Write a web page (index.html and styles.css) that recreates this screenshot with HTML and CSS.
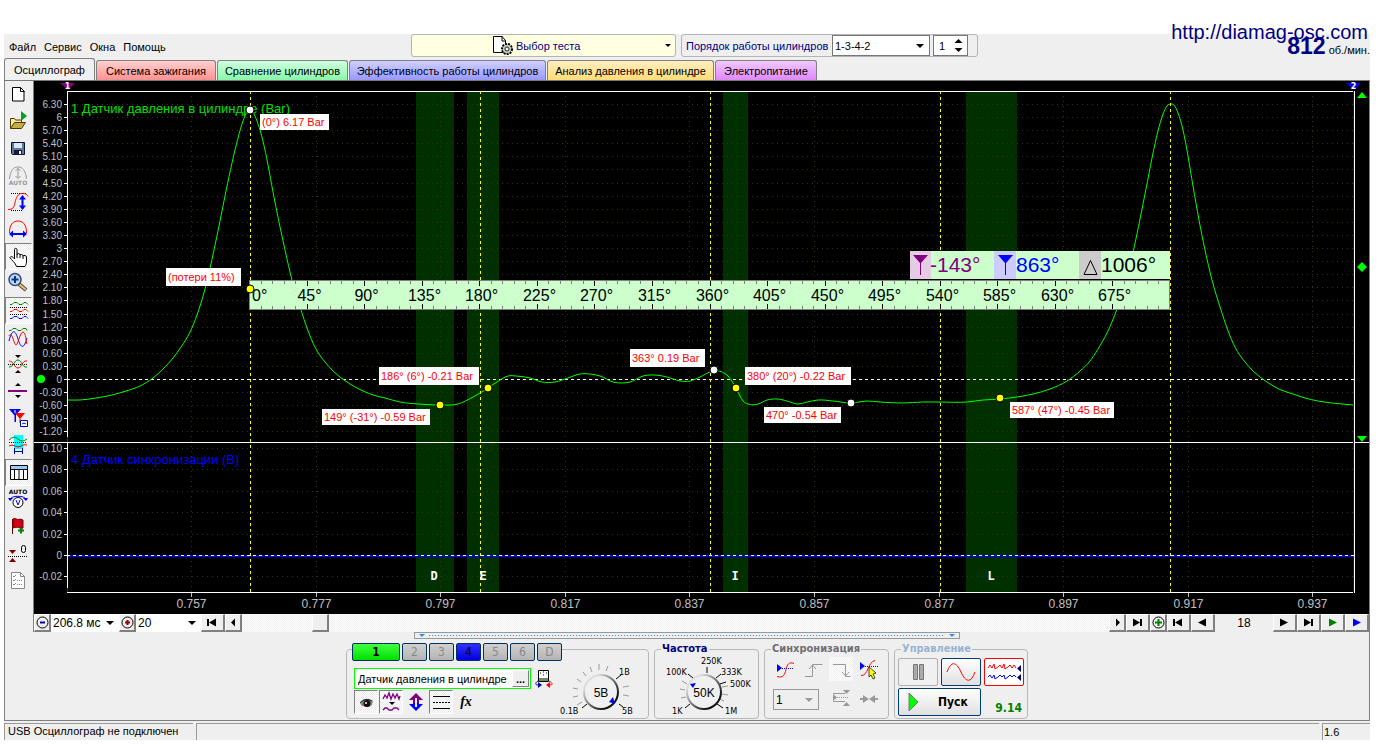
FILE: index.html
```html
<!DOCTYPE html>
<html lang="ru">
<head>
<meta charset="utf-8">
<title>Осциллограф</title>
<link rel="stylesheet" href="styles.css">
</head>
<body>
<div class="app">
  <a class="site-link" href="#">http://diamag-osc.com</a>

  <header class="topbar">
    <nav class="menu">
      <button type="button">Файл</button>
      <button type="button">Сервис</button>
      <button type="button">Окна</button>
      <button type="button">Помощь</button>
    </nav>
    <button type="button" class="test-button">
      <svg class="test-icon" width="22" height="22" viewBox="0 0 22 22">
        <path d="M1.5 1.5h8.500l3.500 4v12h-12z" fill="#fff" stroke="#000"/>
        <path d="M10 1v5h4" fill="none" stroke="#000"/>
        <circle cx="15" cy="14" r="5" fill="#bcd0bc" stroke="#000" stroke-width="2" stroke-dasharray="2 1"/>
        <circle cx="15" cy="14" r="4" fill="#bcd0bc"/>
        <circle cx="15" cy="14" r="2" fill="#fff" stroke="#222"/>
      </svg>
      <span>Выбор теста</span>
      <span class="caret"></span>
    </button>
    <div class="order-box">
      <label for="order">Порядок работы цилиндров</label>
      <span class="select-wrap order-select"><select id="order"><option>1-3-4-2</option></select></span>
      <span class="spin">
        <input type="text" value="1" aria-label="Номер цилиндра">
        <svg width="9" height="16" viewBox="0 0 9 16"><path d="M0.500 5h8L4.500 1zM0.500 10h8L4.500 14z"/></svg>
      </span>
    </div>
    <div class="rpm"><b>812</b><span>об./мин.</span></div>
  </header>

  <nav class="tabs">
    <button type="button" class="tab tab-active">Осциллограф</button>
    <button type="button" class="tab tab-red">Система зажигания</button>
    <button type="button" class="tab tab-green">Сравнение цилиндров</button>
    <button type="button" class="tab tab-blue">Эффективность работы цилиндров</button>
    <button type="button" class="tab tab-yellow">Анализ давления в цилиндре</button>
    <button type="button" class="tab tab-pink">Электропитание</button>
  </nav>

  <main class="main">
    <div class="workspace">
      <div class="toolbar">
        <button type="button" aria-label="Новый"><svg viewBox="0 0 27 27"><path d="M7.500 6.500h8l3.500 3.500v10h-11.500z" fill="#fff" stroke="#000"/><path d="M15.500 6.500v4h4" fill="none" stroke="#000"/></svg></button>
        <button type="button" aria-label="Открыть"><svg viewBox="0 0 27 27"><path d="M5.500 20.500v-10h4l1 1.500h6v3" fill="#ffe896" stroke="#4a3c00"/><path d="M5.500 20.500l4-6h11l-4 6z" fill="#c8ac48" stroke="#4a3c00"/><path d="M16 3l6 5-6 5z" fill="#00a020"/></svg></button>
        <button type="button" aria-label="Сохранить"><svg viewBox="0 0 27 27"><path d="M6.500 7.500h13v12h-12l-1-1z" fill="#607890" stroke="#101030"/><path d="M9 8h8v5H9z" fill="#d8ecff"/><path d="M9 15h8v5H9z" fill="#181840"/><path d="M14 16h2v3h-2z" fill="#fff"/></svg></button>
        <button type="button" aria-label="Авто амплитуда"><svg viewBox="0 0 27 27"><path d="M4.500 17c1-9 4-12 8.500-12s7.500 3 8.500 12M13 6v10M10.500 9L13 6.500 15.500 9M10.500 14l2.500 2.500 2.500-2.500" fill="none" stroke="#999"/><text x="13" y="23" text-anchor="middle" class="icon-text grey">AUTO</text></svg></button>
        <button type="button" aria-label="Высота"><svg viewBox="0 0 27 27"><path d="M6 4.500h16M6 21.500h12" stroke="#000" stroke-dasharray="1 1"/><path d="M3 20.500c5 0 6-2 7-7s3-9 7-9 5 1 6 3" fill="none" stroke="red"/><path d="M17.500 8v10" stroke="#00f" stroke-width="2"/><path d="M14 10.500l3.500-4.500 3.500 4.500zM14 16.500l3.500 4.500 3.500-4.500z" fill="#00f"/></svg></button>
        <button type="button" aria-label="Ширина"><svg viewBox="0 0 27 27"><path d="M4.500 17c0-8 3-12 8.500-12s8.500 4 8.500 12" fill="none" stroke="red"/><path d="M6 18h15" stroke="#00f" stroke-width="2"/><path d="M8 14.500L4 18l4 3.500zM18 14.500l4 3.500-4 3.500z" fill="#00f"/></svg></button>
        <button type="button" class="pressed" aria-label="Рука"><svg viewBox="0 0 27 27"><path d="M11.500 23.500c-1-4-5-6-6.500-9 1-1.500 3-1 4.500 1.500V6.500c0-1.500 2.500-1.500 2.500 0v5c1-1.500 3-1 3 .500 1-1 3-.5 3 1 1-1 3.500-.5 3.500 1v5c0 2-1 3-1.500 4.500z" fill="#fff" stroke="#000"/><path d="M12 11v4M15 12v3M18 13v3" stroke="#000"/></svg></button>
        <button type="button" aria-label="Масштаб"><svg viewBox="0 0 27 27"><path d="M14 14l7 6" stroke="#4a4a50" stroke-width="4"/><path d="M14.500 14.500l6 5" stroke="#f0c870" stroke-width="2"/><circle cx="10" cy="9.500" r="6" fill="#b8d8f8" stroke="#384878" stroke-width="1.500"/><path d="M10 6v7M6.500 9.500h7" stroke="#103080" stroke-width="2"/></svg></button>
        <button type="button" class="pressed" aria-label="Раздельные графики"><svg viewBox="0 0 27 27"><g fill="none"><path d="M5 7.500h2l2-2h3l2 2h3l2-2h2l2 2" stroke="#008000"/><path d="M5 10.500h18M5 17.500h18" stroke="#000" stroke-dasharray="1 1"/><path d="M5 14.500h2l2-2h3l2 2h3l2-2h2l2 2" stroke="red"/><path d="M5 21.500h2l2-2h3l2 2h3l2-2h2l2 2" stroke="#00f"/></g></svg></button>
        <button type="button" aria-label="Наложение"><svg viewBox="0 0 27 27"><g fill="none"><path d="M4 6.500h2l2-2h3l2 2h3l2-2h3l1 2" stroke="#008000"/><path d="M4 17c3-12 6-12 9-2s6 10 9-1" stroke="#00f"/><path d="M4 12c3-6 5 9 7 9s4-13 7-13 3 11 4 12" stroke="red"/></g></svg></button>
        <button type="button" aria-label="Центр"><svg viewBox="0 0 27 27"><path d="M10 4h6l-3 3zM10 22h6l-3-3z"/><path d="M3 13.500h20" stroke="#000" stroke-dasharray="1 1"/><g fill="none"><path d="M4 10c5 0 5 7 9 7s4-8 9-7" stroke="red"/><path d="M4 16c5 0 5-7 9-7s4 8 9 7" stroke="#008000"/></g></svg></button>
        <button type="button" aria-label="Разделитель"><svg viewBox="0 0 27 27"><path d="M10 8h6l-3-3zM10 17h6l-3 3z"/><path d="M3 13h19" stroke="#800080" stroke-width="2"/></svg></button>
        <button type="button" aria-label="Маркеры"><svg viewBox="0 0 27 27"><path d="M4 4h12l-6 7zM9.500 9h1.500v8H9.500z" fill="#00f"/><path d="M10 8h10l-5 6zM14.500 13h1v5h-1z" fill="red"/><path d="M10 5v3" stroke="#fff"/><path d="M15.500 15.500h7v6h-7z" fill="#fff" stroke="#008"/><path d="M17 19l2-1 2 1" fill="none" stroke="#00f"/></svg></button>
        <button type="button" aria-label="Диапазон"><svg viewBox="0 0 27 27"><path d="M9 3h9v14H9z" fill="#0ff"/><path d="M4 8q5-5 9-1t9 0" fill="none" stroke="#008000"/><path d="M4 10.500h18" stroke="#000" stroke-dasharray="1 1"/><path d="M4 14q3-2 6 0t6 0 6-1" fill="none" stroke="red"/><path d="M9.500 16v6M17.500 16v6M10 19.500h7" stroke="#00a"/></svg></button>
        <button type="button" class="pressed" aria-label="Таблица"><svg viewBox="0 0 27 27"><path d="M5.500 6.500h17v14h-17z" fill="#fff" stroke="#000"/><path d="M6 7h16v3H6z" fill="#98c8f8"/><path d="M6 10.500h16M9.500 11v9M14 11v9M18.500 11v9" stroke="#000"/></svg></button>
        <button type="button" aria-label="Авто вольтметр"><svg viewBox="0 0 27 27"><text x="13" y="8" text-anchor="middle" class="icon-text">AUTO</text><path d="M5 14c0-5 16-5 16 0" fill="none" stroke="#00f"/><path d="M3 12l2 3 3-3zM18 12l3 3 2-3z" fill="#00f"/><circle cx="13" cy="16.500" r="5" fill="#fff" stroke="#000"/><path d="M11 14l2 5 2-5" fill="none" stroke="#00f"/></svg></button>
        <button type="button" aria-label="Флаг"><svg viewBox="0 0 27 27"><path d="M7.500 6v15" stroke="#600"/><path d="M8 6c3-2 4 2 7 0l3 1v8c-3 1-5-2-10 0z" fill="#d00010" stroke="#700"/><path d="M16 14.500v6M13 17.500h6" stroke="#008000" stroke-width="2"/></svg></button>
        <button type="button" aria-label="Обнуление"><svg viewBox="0 0 27 27"><path d="M4 10h7l-3.500 4zM4 22h7l-3.500-4z" fill="#800000"/><path d="M3 16.500h20" stroke="#000" stroke-dasharray="1 1"/><rect x="16.500" y="5.500" width="4" height="7" rx="2" fill="none" stroke="#000"/></svg></button>
        <button type="button" aria-label="Отчёт"><svg viewBox="0 0 27 27"><path d="M6.500 5.500h9l4 4v12h-13z" fill="#fff" stroke="#888"/><path d="M15.500 5.500v4h4M8 9l1 1 2-2M8 13l1 1 2-2M8 17l1 1 2-2" fill="none" stroke="#888"/><path d="M12 13.500h5M12 17.500h5" stroke="#888" stroke-dasharray="1 1"/></svg></button>
      </div>

      <div class="scope">
        <svg id="chart" class="chart" role="img" aria-label="График давления в цилиндре"></svg>
        <div class="timebar">
          <button type="button" aria-label="Уменьшить" class="key key-s"><svg viewBox="0 0 15 15"><circle cx="7.500" cy="7.500" r="5.500" fill="none" stroke="#000"/><path d="M5 7.500h5" stroke="#00a" stroke-width="2"/></svg></button>
          <span class="select-wrap flat w68"><select aria-label="Время"><option>206.8 мс</option></select></span>
          <button type="button" aria-label="Увеличить" class="key key-s"><svg viewBox="0 0 15 15"><circle cx="7.500" cy="7.500" r="5.500" fill="none" stroke="#000"/><path d="M5 7.500h5M7.500 5v5" stroke="#900" stroke-width="2"/></svg></button>
          <span class="select-wrap flat w64"><select aria-label="Делений"><option>20</option></select></span>
          <button type="button" aria-label="В начало" class="key"><svg viewBox="0 0 15 15"><path d="M4 7.500l7-4v8zM2 4h2v7H2z"/></svg></button>
          <button type="button" aria-label="Назад" class="key key-s"><svg viewBox="0 0 15 15"><path d="M5 7.500l4-4v8z"/></svg></button>
          <div class="track"><button type="button" aria-label="Позиция" class="key key-s"></button></div>
          <button type="button" aria-label="Вперёд" class="key key-s"><svg viewBox="0 0 15 15"><path d="M10 7.500l-4-4v8z"/></svg></button>
          <button type="button" aria-label="В конец" class="key"><svg viewBox="0 0 15 15"><path d="M10 7.500l-7-4v8zM10 4h2v7h-2z"/></svg></button>
          <button type="button" aria-label="Добавить" class="key key-s"><svg viewBox="0 0 15 15"><circle cx="7.500" cy="7.500" r="5.500" fill="none" stroke="#000"/><path d="M4 7.500h7M7.500 4v7" stroke="#008000" stroke-width="2"/></svg></button>
          <button type="button" aria-label="Первая запись" class="key"><svg viewBox="0 0 15 15"><path d="M4 7.500l7-4v8zM2 4h2v7H2z"/></svg></button>
          <button type="button" aria-label="Предыдущая запись" class="key"><svg viewBox="0 0 15 15"><path d="M3 7.500l8-4v8z"/></svg></button>
          <output class="count">18</output>
          <button type="button" aria-label="Следующая запись" class="key"><svg viewBox="0 0 15 15"><path d="M11 7.500l-8-4v8z"/></svg></button>
          <button type="button" aria-label="Последняя запись" class="key"><svg viewBox="0 0 15 15"><path d="M10 7.500l-7-4v8zM10 4h2v7h-2z"/></svg></button>
          <button type="button" aria-label="Воспроизвести" class="key"><svg viewBox="0 0 15 15"><path d="M12 7.500l-8-4v8z" fill="#008000"/></svg></button>
          <button type="button" aria-label="Воспроизвести всё" class="key"><svg viewBox="0 0 15 15"><path d="M12 7.500l-8-4v8z" fill="#00f"/></svg></button>
        </div>
      </div>
    </div>

    <div class="splitter"><i></i><span></span><i></i></div>

    <div class="panels">
      <fieldset class="group g-channel">
        <legend aria-label="Каналы">
          <span class="channels">
            <button type="button" class="ch ch-1">1</button><button type="button" class="ch">2</button><button type="button" class="ch">3</button><button type="button" class="ch ch-4">4</button><button type="button" class="ch">5</button><button type="button" class="ch">6</button><button type="button" class="ch">D</button>
          </span>
        </legend>
        <div class="channel-body">
          <div class="channel-left">
            <div class="sensor-row">
              <span class="sensor"><input type="text" value="Датчик давления в цилиндре" aria-label="Датчик"><button type="button">...</button></span>
              <svg width="18" height="20" viewBox="0 0 18 20"><path d="M3.500 1.500h10v11h-10z" fill="#fff" stroke="#000"/><path d="M5 4h1M8 3h1M11 4h1M8 6h1" stroke="#000"/><path d="M4 9h9v3H4z" fill="#6a8a6a"/><path d="M3 12c-3 2-3 4 0 4" fill="none" stroke="#00a"/><path d="M3 13l4 3-4 3z" fill="#00a"/><path d="M14 12c4 2 4 4 1 4" fill="none" stroke="red"/><path d="M15 13l-4 3 4 3z" fill="red"/></svg>
            </div>
            <div class="mini-row">
              <button type="button" class="pressed" aria-label="Видимость"><svg viewBox="0 0 24 24"><path d="M6 12q5-6 13-1l-1 4q-5 4-11 0z" fill="#888"/><path d="M6 13q6-6 12-2" fill="none" stroke="#222"/><circle cx="13" cy="13.500" r="3.500" fill="#111"/><path d="M7 15h2" stroke="#c66"/><circle cx="12" cy="13" r="1" fill="#fff"/></svg></button>
              <button type="button" class="pressed" aria-label="Фильтр"><svg viewBox="0 0 24 24"><path d="M4 9l2-4 2 3 2-5 2 6 2-5 2 4 2-4 2 5 1-3M4 20l2-2h2l2 2h3l2-2h3l2 2" fill="none" stroke="#800080" stroke-width="1.300"/><path d="M10 12h6l-3 3z"/></svg></button>
              <button type="button" aria-label="Инверсия"><svg viewBox="0 0 24 24"><path d="M12 3l7 7h-4v3h-2V8h-2v5H9v-3H5z" fill="#800080"/><path d="M12 21l7-7h-4v-1h-2v4h-2v-4H9v1H5z" fill="#00f"/></svg></button>
              <button type="button" class="pressed" aria-label="Линии"><svg viewBox="0 0 24 24"><path d="M4 6.500h17M4 18.500h17" stroke="#000"/><path d="M4 12.500h17" stroke="#000" stroke-dasharray="2 1"/></svg></button>
              <button type="button" class="fx"><i>f</i>x</button>
            </div>
          </div>
          <svg class="knob" width="110" height="66" viewBox="548 650 110 66">
            <defs><linearGradient id="rim" x1="0" y1="0" x2="1" y2="1"><stop offset="0.200" stop-color="#ddd"/><stop offset="0.800" stop-color="#111"/></linearGradient></defs>
            <g stroke="#999"><path d="M581 702l-5 3M577 696l-5 1M577 689l-5-1M580 682l-4-3M585 676l-3-4M591 672l-2-5M598 670v-6M605 671l2-5M622 687l6-1M622 695l6 1"/></g>
            <path d="M615 679l5-4M618 704l4 3M586 704l-5 4" stroke="#000"/>
            <circle cx="600" cy="692" r="17" fill="#f0f0f0" stroke="url(#rim)" stroke-width="2"/>
            <path d="M608 702l4-5 2 7z" fill="#00f"/>
            <g class="knob-text"><text x="618" y="675">1В</text><text x="559" y="714">0.1В</text><text x="621" y="714">5В</text></g>
            <text x="600" y="697" class="knob-value" text-anchor="middle">5В</text>
          </svg>
        </div>
      </fieldset>

      <fieldset class="group g-freq">
        <legend>Частота</legend>
        <svg class="knob" width="100" height="66" viewBox="656 650 100 66">
          <g stroke="#999"><path d="M686 697l-5 1M685 690l-5-1M687 684l-5-3M722 687l6-1M722 694l6 1M720 699l4 2"/></g>
          <path d="M693 678l-5-4M707 673v-6M716 678l5-4M720 684l6-2M717 704l6 4M690 704l-5 4" stroke="#000"/>
          <circle cx="704" cy="692" r="17" fill="#f0f0f0" stroke="url(#rim)" stroke-width="2"/>
          <path d="M690 684l6-1-3 5z" fill="#00f"/>
          <g class="knob-text"><text x="701" y="664">250K</text><text x="666" y="675">100K</text><text x="721" y="675">333K</text><text x="730" y="687">500K</text><text x="672" y="714">1K</text><text x="725" y="714">1M</text></g>
          <text x="704" y="697" class="knob-value" text-anchor="middle">50K</text>
        </svg>
      </fieldset>

      <fieldset class="group g-sync">
        <legend>Синхронизация</legend>
        <div class="sync-grid">
          <button type="button" aria-label="Уровень"><svg viewBox="0 0 24 24"><path d="M4 7l5 4-5 4z" fill="#00f"/><path d="M9 11.500h12" stroke="#00f" stroke-dasharray="1 1"/><path d="M4 19.500c6 2 8-2 9-7s3-8 8-6" fill="none" stroke="red"/></svg></button>
          <button type="button" aria-label="По фронту"><svg viewBox="0 0 24 24"><path d="M4 19.500h7.500v-12h10M8 12l3.500-4 3.500 4" fill="none" stroke="#999"/></svg></button>
          <button type="button" class="dither" aria-label="По спаду"><svg viewBox="0 0 24 24"><path d="M4 7.500h12.500v12h5M13 15l3.500 4 3.500-4" fill="none" stroke="#999"/></svg></button>
          <button type="button" aria-label="Выбор уровня"><svg viewBox="0 0 24 24"><path d="M3 5l5 4-5 4z" fill="#00f"/><path d="M8 9.500h13" stroke="#00f" stroke-dasharray="1 1"/><path d="M4 18.500c7 1 7-14 14-15" fill="none" stroke="red"/><path d="M12 10l7 6-3 1 2 4-2 1-2-4-2 2z" fill="#ff0" stroke="#000" stroke-width=".7"/></svg></button>
          <span class="select-wrap sync-select"><select aria-label="Канал синхронизации"><option>1</option></select></span>
          <button type="button" aria-label="Центрировать"><svg viewBox="0 0 24 24"><path d="M4 8l4 3.500L4 15zM14 4h7l-3.500 4zM14 20h7l-3.500-4z" fill="#999"/><path d="M4 7.500h12M4 15.500h12" stroke="#999"/><path d="M8 11.500h12" stroke="#999" stroke-dasharray="1 1"/></svg></button>
          <button type="button" aria-label="Сжать"><svg viewBox="0 0 24 24"><path d="M6 9l6 4-6 4v-3H3v-2h3zM18 9l-6 4 6 4v-3h3v-2h-3z" fill="#999"/></svg></button>
        </div>
      </fieldset>

      <fieldset class="group g-control">
        <legend>Управление</legend>
        <div class="control-grid">
          <button type="button" class="push push-off" aria-label="Пауза"><svg viewBox="0 0 36 24"><path d="M13.500 4.500h4v15h-4zM19.500 4.500h4v15h-4z" fill="#aaa" stroke="#777"/></svg></button>
          <button type="button" class="push" aria-label="Синус"><svg viewBox="0 0 36 24"><path d="M4 12c4-11 9-11 14 0s10 11 14 0" fill="none" stroke="red"/></svg></button>
          <button type="button" class="push push-red" aria-label="Самописец"><svg viewBox="0 0 36 24"><path d="M2 8l2-3 2 3 2-4 1 5 3-2 2-2 2 3 2-4 1 5 3-2 2-2 2 3 2-3 2 3" fill="none" stroke="red"/><path d="M2 17l2-2 2 3 2-3 1 4 3-2 2-2 2 2 2-2 1 4 3-2 2-2 2 2 2-2 2 2" fill="none" stroke="#00f"/><path d="M35 5v7l-4-3.500zM35 14v7l-4-3.500z" fill="#008"/></svg></button>
          <button type="button" class="push push-start"><svg width="12" height="20" viewBox="0 0 12 20"><path d="M1 1v18l9-9z" fill="#0f0" stroke="#777"/></svg>Пуск</button>
          <output class="version">9.14</output>
        </div>
      </fieldset>
    </div>
  </main>

  <footer class="status">
    <span class="cell cell-msg">USB Осциллограф не подключен</span>
    <span class="cell cell-fill"></span>
    <span class="cell cell-ver">1.6</span>
  </footer>
</div>
<script src="chart.js"></script>
</body>
</html>
```
FILE: styles.css
```css
* { box-sizing: border-box; }
body {
  margin: 0;
  background: #fff;
  color: #000;
  font: 11px/14px "Liberation Sans", Arial, sans-serif;
}
button, input, select { font: inherit; color: inherit; }
button { padding: 0; border: 0; background: none; }
svg { display: block; }

.app { position: relative; margin: 34px 12px 0 4px; background: #efefef; }
.site-link {
  position: absolute;
  top: -14px;
  right: 2px;
  z-index: 1;
  font: 20px/24px "Liberation Sans", Arial, sans-serif;
  color: #000080;
  text-decoration: none;
}

/* Top bar */
.topbar { display: flex; align-items: flex-start; height: 24px; }
.menu { display: flex; gap: 8px; width: 407px; padding: 6px 5px 0; }
.test-button {
  display: flex;
  align-items: center;
  gap: 2px;
  width: 265px;
  height: 23px;
  padding: 0 4px 0 80px;
  border: 1px solid #b4b4b4;
  border-radius: 3px;
  background: #ffffe1;
  color: #000080;
}
.caret, .select-wrap::after {
  border: 4px solid transparent;
  border-top-color: #000;
  border-bottom: 0;
}
.caret { margin-left: auto; border-width: 3px; border-bottom: 0; }
.order-box {
  display: flex;
  align-items: center;
  gap: 3px;
  height: 23px;
  margin-left: 5px;
  padding: 0 9px 0 4px;
  border: 1px solid #b4b4b4;
  border-radius: 3px;
}
.order-box label { width: 143px; color: #000080; white-space: nowrap; }
.select-wrap { display: grid; align-items: center; border: 1px solid #777; background: #fff; }
.select-wrap::after { content: ""; grid-area: 1 / 1; justify-self: end; margin-right: 5px; pointer-events: none; }
.select-wrap select {
  grid-area: 1 / 1;
  width: 100%;
  padding: 0 0 0 2px;
  border: 0;
  background: none;
  appearance: none;
}
.order-select { width: 98px; height: 21px; }
.spin { display: flex; align-items: center; width: 35px; height: 21px; border: 1px solid #777; background: #fff; }
.spin input { width: 20px; padding: 0 0 0 5px; border: 0; background: none; }
.rpm { display: flex; align-items: baseline; gap: 3px; margin-left: auto; color: #000; }
.rpm b { font: bold 23px/24px "Liberation Sans", Arial, sans-serif; color: #000080; }

/* Tabs */
.tabs { display: flex; align-items: flex-end; gap: 1px; height: 23px; border-bottom: 1px solid #777; }
.tab {
  height: 20px;
  border: 1px solid #808080;
  border-bottom: 0;
  border-radius: 3px 3px 0 0;
  white-space: nowrap;
}
.tab-active { width: 91px; height: 22px; background: #f0f0f0; }
.tab-red { width: 120px; background: linear-gradient(#ffd0d0, #ff9090); }
.tab-green { width: 131px; background: linear-gradient(#d0ffe0, #88f8a8); }
.tab-blue { width: 197px; background: linear-gradient(#d0d0ff, #9898ff); }
.tab-yellow { width: 167px; background: linear-gradient(#ffeec0, #ffdc78); }
.tab-pink { width: 102px; background: linear-gradient(#f0c8ff, #e088fa); }

/* Main window */
.main { border: solid #808080; border-width: 0 1px 1px; }
.workspace { display: flex; }
.toolbar { display: flex; flex-direction: column; width: 29px; border-right: 1px solid #808080; }
.toolbar button { height: 27px; width: 27px; border: 1px solid transparent; }
.toolbar svg { width: 27px; height: 27px; margin: -1px; }
.pressed, .toolbar .pressed {
  border: 1px solid #fff;
  border-top-color: #808080;
  border-left-color: #808080;
  background: repeating-conic-gradient(#fff 0 25%, #ebebeb 0 50%) 0 0 / 2px 2px;
}
.icon-text { font: bold 6px "DejaVu Sans", sans-serif; }
.grey { fill: #999; }
.scope { flex: 1; min-width: 0; }
.chart { width: 100%; height: 533px; background: #000; }

/* Chart text */
.c-axis { font: 10px "Liberation Sans", Arial, sans-serif; fill: #c0c0c0; }
.c-time { font: 12px "Liberation Sans", Arial, sans-serif; fill: #c0c0c0; }
.c-title { font: 13px "Liberation Sans", Arial, sans-serif; fill: #00e000; }
.c-title2 { font: 13px "Liberation Sans", Arial, sans-serif; fill: #0000ff; }
.c-note { font: 11px "Liberation Sans", Arial, sans-serif; fill: #f00; }
.c-ruler { font: 16px "Liberation Sans", Arial, sans-serif; fill: #000; }
.c-read { font: 21px "Liberation Sans", Arial, sans-serif; }
.c-phase { font: bold 12px "DejaVu Sans Mono", monospace; fill: #fff; }
.c-mark { font: bold 8px "DejaVu Sans", sans-serif; fill: #fff; }

/* Time bar */
.timebar { display: flex; height: 18px; }
.key {
  display: grid;
  place-items: center;
  width: 24px;
  height: 18px;
  border: 1px solid #fff;
  border-right: 2px solid #808080;
  border-bottom: 2px solid #808080;
  background: #efefef;
}
.key svg { width: 15px; height: 15px; }
.key-s { width: 17px; }
.flat { height: 18px; border: 0; }
.w68 { width: 68px; }
.w64 { width: 65px; }
.flat, .count { font-size: 12px; }
.track { flex: 1; padding-left: 70px; background: repeating-conic-gradient(#fff 0 25%, #efefef 0 50%) 0 0 / 2px 2px; }
.count { width: 58px; text-align: center; line-height: 18px; }

/* Splitter */
.splitter {
  display: flex;
  align-items: center;
  gap: 4px;
  width: 546px;
  height: 7px;
  margin: 0 auto;
  padding: 0 4px;
  border: 1px solid #999;
}
.splitter i { border: 3px solid transparent; border-top-color: #3090f0; border-bottom: 0; }
.splitter span { flex: 1; height: 1px; background: repeating-linear-gradient(90deg, #3090f0 0 1px, transparent 1px 3px); }

/* Panels */
.panels { display: flex; justify-content: center; gap: 5px; padding: 4px 0 1px; }
.group {
  min-width: 0;
  height: 76px;
  margin: 0;
  padding: 0;
  border: 1px solid #b8b8b8;
  border-radius: 4px;
}
.group legend { height: 12px; margin-left: 6px; padding: 0 1px; font: bold 11px/12px "DejaVu Sans Condensed", sans-serif; }
.g-channel { width: 303px; }
.group.g-channel legend { margin-left: 5px; padding: 0; }
.g-freq { width: 105px; }
.g-freq legend { color: #000080; }
.g-sync { width: 125px; }
.g-sync legend { color: #707070; }
.g-control { width: 134px; }
.g-control legend { color: #99b4d1; }
.channels { display: flex; gap: 2px; }
.ch {
  width: 25px;
  height: 18px;
  border: 1px solid #003060;
  border-radius: 2px;
  background: linear-gradient(#d0d0d0, #b4b4b4);
  color: #888;
  font: 12px/14px "DejaVu Sans Condensed", "Liberation Sans", sans-serif;
}
.ch-1 { width: 48px; background: linear-gradient(#40ff40, #00e000); color: #000; font-weight: bold; }
.ch-4 { background: linear-gradient(#3030ff, #0000e0); color: #000; }
.channel-body { display: flex; }
.channel-left { padding: 13px 0 0 7px; }
.sensor-row { display: flex; align-items: center; gap: 4px; }
.sensor { display: flex; width: 177px; height: 21px; padding: 1px; border: 1px solid #0f0; background: #fff; }
.sensor input { flex: 1; min-width: 0; padding: 0 0 0 2px; border: 0; background: none; }
.sensor button {
  width: 17px;
  height: 17px;
  border: 1px solid #fff;
  border-right-color: #808080;
  border-bottom-color: #808080;
  background: #efefef;
  line-height: 10px;
  font-weight: bold;
}
.mini-row { display: flex; gap: 1px; padding-top: 1px; }
.mini-row button { width: 24px; height: 24px; }
.mini-row svg { width: 24px; height: 24px; margin: -1px; }
.mini-row button:not(.pressed) svg { margin: 0; }
.fx { font: italic bold 14px/20px "Liberation Serif", serif; }
.g-channel .knob { margin: -5px 0 0 -4px; flex: none; }
.knob-text { font: 9px "DejaVu Sans Condensed", "Liberation Sans", sans-serif; }
.knob-value { font: 12px "Liberation Sans", Arial, sans-serif; }
.g-freq .knob { margin: -5px 0 0 1px; }
.sync-grid { display: grid; grid-template-columns: 24px 24px 24px 24px; gap: 4px 4px; padding: 2px 0 0 8px; }
.sync-grid svg { width: 24px; height: 24px; }
.sync-select { grid-column: span 2; width: 46px; height: 21px; margin-top: 4px; border-color: #999; background: none; font-size: 12px; }
.sync-select::after { border-top-color: #999; }
.dither { background: repeating-conic-gradient(#fff 0 25%, #efefef 0 50%) 0 0 / 2px 2px; }
.control-grid { display: grid; grid-template-columns: 40px 40px 40px; gap: 2px 3px; padding: 3px 0 0 3px; }
.push { height: 28px; border: 1px solid #003c74; border-radius: 2px; background: linear-gradient(#fff, #e0e0e0); }
.push svg { width: 36px; height: 24px; margin: 0 auto; }
.push-off { border-color: #b0b0b0; background: #f0f0f0; }
.push-red { border-color: #f00; background: #fff; }
.push-start {
  grid-column: span 2;
  display: flex;
  align-items: center;
  gap: 18px;
  padding-left: 9px;
  font: bold 12px/14px "DejaVu Sans Condensed", sans-serif;
}
.push-start svg { width: 12px; height: 20px; margin: 0; }
.version { align-self: end; padding: 0 2px 1px 0; text-align: right; color: #008000; font: bold 12px/14px "DejaVu Sans Condensed", sans-serif; }

/* Status bar */
.status { display: flex; gap: 3px; padding-top: 2px; }
.cell { height: 17px; padding: 0 3px; border: solid #999; border-width: 1px 0 0 1px; white-space: nowrap; }
.cell-msg { width: 189px; }
.cell-fill { flex: 1; }
.cell-ver { width: 48px; padding: 1px 1px; }
```
FILE: chart.js
```js
(function () {
  var NS = 'http://www.w3.org/2000/svg';
  var svg = document.getElementById('chart');
  var LEFT = 67, RIGHT = 1354, TOP = 91, SPLIT = 442, BOTTOM = 592;
  var width, scale;

  function X(x) { return LEFT + (x - LEFT) * scale; }
  function el(name, attrs, text) {
    var node = document.createElementNS(NS, name);
    for (var key in attrs) node.setAttribute(key, attrs[key]);
    if (text !== undefined) node.textContent = text;
    svg.appendChild(node);
    return node;
  }
  function line(x1, y1, x2, y2, color, dash) {
    var a = { x1: x1, y1: y1, x2: x2, y2: y2, stroke: color, 'shape-rendering': 'crispEdges' };
    if (dash) a['stroke-dasharray'] = dash;
    el('line', a);
  }
  function rect(x, y, w, h, fill) { el('rect', { x: x, y: y, width: w, height: h, fill: fill }); }
  function text(x, y, cls, value, anchor, fill) {
    var a = { x: x, y: y, 'class': cls };
    if (anchor) a['text-anchor'] = anchor;
    if (fill) a.style = 'fill:' + fill;
    el('text', a, value);
  }

  var curve = [[68,400],[80,400],[96,398],[112,395],[126,391],[140,386],[153,378],[163,369],[173,358],[181,347],
    [190,332],[197,315],[205,289],[214,250],[220,221],[226,191],[232,163],[238,138],[243,121],[247,112],[250,109],
    [253,112],[257,121],[263,141],[268,165],[273,192],[279,222],[285,250],[292,280],[301,310],[307,328],[313,343],
    [319,354],[325,362],[332,370],[340,377],[350,384],[361,390],[373,395],[385,398],[400,402],[418,404],[440,405],
    [458,404],[473,397],[488,388],[500,380],[508,376],[516,376],[530,378],[542,382],[555,382],[568,378],[580,374],
    [590,374],[600,376],[613,382],[622,383],[630,382],[643,376],[655,375],[667,377],[680,381],[690,381],[700,377],
    [713,371],[722,372],[728,376],[736,388],[743,401],[748,404],[758,404],[767,400],[777,399],[787,401],[798,404],
    [807,402],[818,400],[833,401],[851,403],[867,401],[880,402],[903,403],[922,402],[940,402],[967,402],[983,400],
    [1000,399],[1017,397],[1033,394],[1050,389],[1067,381],[1080,371],[1090,361],[1098,349],[1107,333],[1117,309],
    [1125,284],[1134,248],[1140,219],[1146,189],[1152,158],[1158,131],[1163,114],[1167,106],[1171,104],[1174,105],
    [1178,113],[1183,130],[1188,156],[1193,186],[1199,220],[1205,250],[1212,280],[1221,310],[1227,328],[1233,343],
    [1239,354],[1245,362],[1252,370],[1260,377],[1270,384],[1281,390],[1293,394],[1305,398],[1318,401],[1332,403],
    [1353,405]];

  /* Smooth path whose tangents take the uneven spacing of the samples into account */
  function curvePath() {
    var p = curve, n = p.length, m = [], i;
    function slope(k) { return (p[k + 1][1] - p[k][1]) / (p[k + 1][0] - p[k][0]); }
    for (i = 0; i < n; i++) {
      if (i === 0) m.push(slope(0));
      else if (i === n - 1) m.push(slope(n - 2));
      else {
        var h0 = p[i][0] - p[i - 1][0], h1 = p[i + 1][0] - p[i][0];
        m.push((slope(i - 1) * h1 + slope(i) * h0) / (h0 + h1));
      }
    }
    var d = 'M' + X(p[0][0]) + ' ' + p[0][1];
    for (i = 0; i < n - 1; i++) {
      var h = (p[i + 1][0] - p[i][0]) / 3;
      d += 'C' + [X(p[i][0] + h), p[i][1] + m[i] * h,
        X(p[i + 1][0] - h), p[i + 1][1] - m[i + 1] * h, X(p[i + 1][0]), p[i + 1][1]].join(' ');
    }
    return d;
  }

  function draw() {
    svg.textContent = '';
    width = svg.clientWidth;
    scale = (width - 48) / (RIGHT - LEFT);
    svg.setAttribute('viewBox', '34 81 ' + width + ' 533');
    var right = X(RIGHT), i, y, x;

    [[416, 38], [467, 32], [723, 25], [966, 51]].forEach(function (b) {
      rect(X(b[0]), TOP + 1, b[1] * scale, BOTTOM - TOP - 1, '#003000');
    });

    for (i = 21; i >= -4; i--) {
      y = Math.round(379 - i * 13.1) + 0.5;
      line(LEFT + 5, y, right, y, '#333310', '1 4');
      line(64, y, 67, y, '#fff');
      text(62, y + 3, 'c-axis', i % 10 === 0 ? String(i * 3 / 10) : (i * 0.3).toFixed(2), 'end');
    }
    for (i = 5; i >= -1; i--) {
      y = Math.round(555 - i * 21.4) + 0.5;
      line(LEFT + 5, y, right, y, '#333310', '1 4');
      line(64, y, 67, y, '#fff');
      text(62, y + 3, 'c-axis', i === 0 ? '0' : (i * 0.02).toFixed(2), 'end');
    }
    for (i = 0; i < 10; i++) {
      x = Math.round(X(191 + i * 124.6)) + 0.5;
      line(x, TOP + 5, x, BOTTOM, '#333310', '1 4');
      line(x, BOTTOM + 1, x, BOTTOM + 5, '#c0c0c0');
      text(x, 608, 'c-time', (0.757 + i * 0.02).toFixed(3), 'middle');
    }

    text(71, 113, 'c-title', '1 Датчик давления в цилиндре (Bar)');
    text(71, 464, 'c-title2', '4 Датчик синхронизации (В)');

    line(LEFT, TOP + 0.5, right, TOP + 0.5, '#fff');
    line(34, SPLIT + 0.5, 34 + width, SPLIT + 0.5, '#fff');
    line(LEFT, BOTTOM + 0.5, right, BOTTOM + 0.5, '#fff');
    line(LEFT + 0.5, TOP, LEFT + 0.5, BOTTOM, '#fff');
    line(right + 0.5, TOP, right + 0.5, BOTTOM + 1, '#fff');
    line(right - 0.5, TOP, right - 0.5, BOTTOM + 1, '#00f');
    line(LEFT, 379.5, right, 379.5, '#fff', '3 3');
    rect(LEFT + 1, 555, right - LEFT - 1, 2, '#00f');
    line(LEFT, 555.5, right, 555.5, '#fff', '3 3');

    el('path', { d: curvePath(), fill: 'none', stroke: '#00ff00' });
    [250, 480, 710, 940, 1170].forEach(function (v) {
      x = Math.round(X(v)) + 0.5;
      line(x, TOP, x, BOTTOM, '#ff0', '3 3');
    });
    [['D', 434], ['E', 483], ['I', 735], ['L', 991]].forEach(function (p) {
      text(X(p[1]), 580, 'c-phase', p[0], 'middle');
    });

    /* Degree ruler: a mark every 9 degrees, a long one with its label every 45 */
    var r0 = X(250) - 1, r1 = X(1170);
    rect(r0, 280, r1 - r0, 30, '#808080');
    rect(r0 + 1, 281, r1 - r0 - 2, 28, '#ccffcc');
    for (i = 1; i < 80; i++) {
      x = Math.round(r0 + (r1 - r0) * i / 80) + 0.5;
      var major = i % 5 === 0, len = major ? 5 : 3;
      line(x, 281, x, 281 + len, major ? '#000' : '#808080');
      line(x, 309 - len, x, 309, major ? '#000' : '#808080');
      if (major) text(x + 2, 301, 'c-ruler', i * 9 + '°', 'middle');
    }
    text(r0 + 3, 301, 'c-ruler', '0°');

    /* Angle readout, attached to the right end of the ruler */
    var rx = r1 - 260;
    rect(rx, 251, 260, 28, '#ccffcc');
    rect(rx, 279, 260, 1, '#000');
    rect(rx, 251, 21, 28, '#e4cce4');
    rect(rx + 84, 251, 22, 28, '#ccccff');
    rect(rx + 169, 251, 22, 28, '#cccccc');
    el('path', { d: 'M' + (rx + 3) + ' 255h15l-7 8v12h-1v-12z', fill: '#800080' });
    el('path', { d: 'M' + (rx + 88) + ' 255h15l-7 8v12h-1v-12z', fill: '#0000ff' });
    el('path', { d: 'M' + (rx + 174) + ' 274.500h13l-6.500-14z', fill: 'none', stroke: '#000' });
    text(rx + 20, 272, 'c-read', '-143°', null, '#800080');
    text(rx + 106, 272, 'c-read', '863°', null, '#0000ff');
    text(rx + 191, 272, 'c-read', '1006°', null, '#000');

    [[260, 114, 69, 16, '(0°) 6.17 Bar'], [166, 268, 75, 18, '(потери 11%)'],
      [379, 367, 100, 18, '186° (6°) -0.21 Bar'], [322, 409, 108, 16, '149° (-31°) -0.59 Bar'],
      [630, 349, 75, 18, '363° 0.19 Bar'], [745, 367, 106, 18, '380° (20°) -0.22 Bar'],
      [764, 407, 77, 16, '470° -0.54 Bar'], [1010, 402, 104, 16, '587° (47°) -0.45 Bar']
    ].forEach(function (n) {
      rect(X(n[0]), n[1], n[2], n[3], '#fff');
      text(X(n[0]) + 2, n[1] + n[3] / 2 + 4, 'c-note', n[4]);
    });
    [[250, 110, '#fff'], [714, 370, '#fff'], [851, 403, '#fff'], [250, 289, '#ff0'], [440, 405, '#ff0'],
      [488, 388, '#ff0'], [736, 388, '#ff0'], [1000, 398, '#ff0']].forEach(function (p) {
      el('circle', { cx: X(p[0]), cy: p[1], r: 4, fill: p[2], stroke: '#000' });
    });

    /* Markers in the margins */
    el('path', { d: 'M60 83h15l-7 7z', fill: '#800080' });
    text(67.5, 89, 'c-mark', '1', 'middle');
    el('path', { d: 'M' + (right - 8) + ' 83h15l-7 7z', fill: '#0000ff' });
    text(right - 0.5, 89, 'c-mark', '2', 'middle');
    line(67.5, 437, 67.5, 442, '#800080');
    line(67.5, 588, 67.5, 592, '#800080');
    var g = 34 + width - 7;
    el('path', { d: 'M' + (g - 5) + ' 98h10l-5-6z', fill: '#0f0' });
    el('path', { d: 'M' + (g - 5) + ' 267l5-5 5 5-5 5z', fill: '#0f0' });
    el('path', { d: 'M' + (g - 5) + ' 436h10l-5 6z', fill: '#0f0' });
    el('circle', { cx: 41, cy: 379, r: 4, fill: '#0f0' });
  }

  draw();
  window.addEventListener('resize', draw);
})();
```
